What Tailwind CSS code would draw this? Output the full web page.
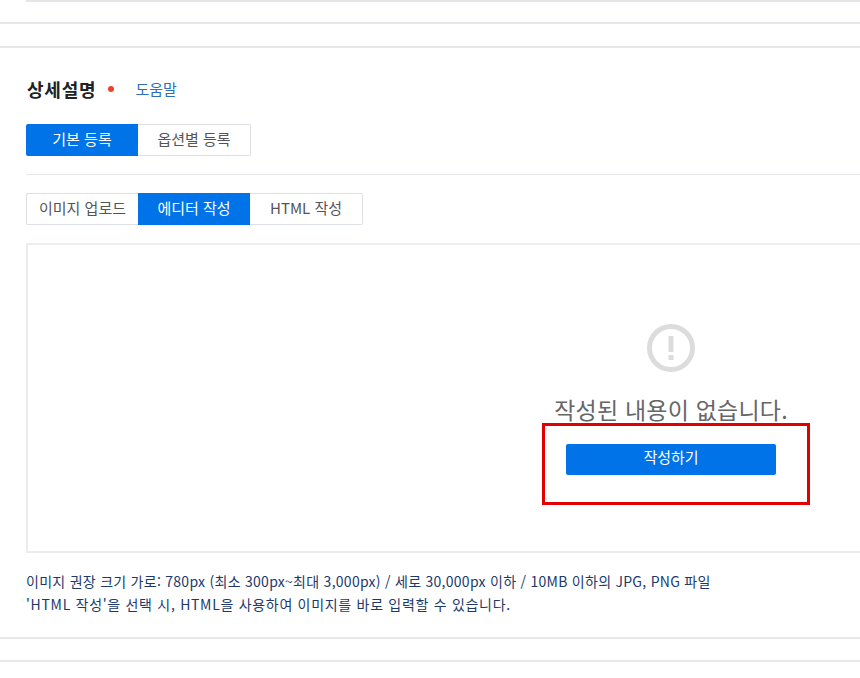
<!DOCTYPE html>
<html lang="ko">
<head>
  <meta charset="UTF-8" />
  <meta name="viewport" content="width=device-width, initial-scale=1.0" />
  <title>상세설명</title>
  <script src="https://cdn.jsdelivr.net/npm/@tailwindcss/browser@4"></script>
</head>
<body class="relative h-[678px] w-[860px] overflow-hidden bg-white font-['Noto_Sans_CJK_KR','Noto_Sans',sans-serif] text-[#333]">

  <!-- previous section end -->
  <div class="h-[24px] border-b-2 border-[#e8e8e8] pl-[26px]">
    <div class="h-[2px] bg-[#e4e6ea]"></div>
  </div>
  <div class="h-[22px]"></div>

  <section class="h-[593px] border-y-2 border-[#e8e8e8] pl-[26px]">
    <div class="mt-[28px] flex h-[26px] items-center">
      <h2 class="pl-px text-[18px] font-bold tracking-[0.8px] text-[#222]">상세설명</h2>
      <span class="ml-[12px] h-[6px] w-[6px] rounded-full bg-[#f0402c]"></span>
      <a class="ml-[21px] text-[15px] text-[#2f6fb8]">도움말</a>
    </div>

    <div class="mt-[22px] flex h-[32px] w-[225px] text-[15px]">
      <button class="w-[112px] rounded-l-[2px] bg-[#0073e9] pb-[2px] text-white">기본 등록</button>
      <button class="w-[113px] rounded-r-[2px] border border-l-0 border-[#dde0e5] pb-[2px] text-[#555]">옵션별 등록</button>
    </div>

    <div class="mt-[18px] h-px bg-[#e6e8ec]"></div>

    <div class="mt-[18px] flex h-[32px] w-[337px] text-[15px]">
      <button class="w-[112px] rounded-l-[2px] border border-r-0 border-[#dde0e5] pb-[2px] text-[#555]">이미지 업로드</button>
      <button class="w-[112px] bg-[#0073e9] pb-[2px] text-white">에디터 작성</button>
      <button class="w-[113px] rounded-r-[2px] border border-l-0 border-[#dde0e5] pb-[2px] text-[#555]">HTML 작성</button>
    </div>

    <div class="mt-[18px] h-[310px] border-y-2 border-l-2 border-[#ececec] pl-[498px] pt-[78px]">
      <div class="flex w-[290px] flex-col items-center">
        <svg class="h-[50px] w-[50px]" viewBox="0 0 50 50" fill="none">
          <circle cx="25" cy="25" r="21.5" stroke="#dcdcdc" stroke-width="5" />
          <rect x="22.5" y="13" width="5" height="16" fill="#dcdcdc" />
          <rect x="22.5" y="32" width="5" height="5" fill="#dcdcdc" />
        </svg>
        <p class="mt-[19px] h-[34px] text-[23px] leading-[34px] tracking-[0.2px] text-[#666]">작성된 내용이 없습니다.</p>
        <button class="mt-[18px] h-[31px] w-[210px] rounded-[2px] bg-[#0073e9] pb-[4px] text-[15px] text-white">작성하기</button>
      </div>
    </div>

    <div class="mt-[17px] text-[14px] leading-[23px] text-[#1b3a6b]">
      <p class="tracking-[0.27px]">이미지 권장 크기 가로: 780px (최소 300px~최대 3,000px) / 세로 30,000px 이하 / 10MB 이하의 JPG, PNG 파일</p>
      <p class="tracking-[0.7px]">'HTML 작성'을 선택 시, HTML을 사용하여 이미지를 바로 입력할 수 있습니다.</p>
    </div>
  </section>

  <div class="mt-[21px] h-[2px] bg-[#e8e8e8]"></div>

  <!-- red annotation box over the screenshot -->
  <div class="absolute left-[542px] top-[423px] h-[82px] w-[268px] border-[3px] border-[#e30000]"></div>
</body>
</html>
